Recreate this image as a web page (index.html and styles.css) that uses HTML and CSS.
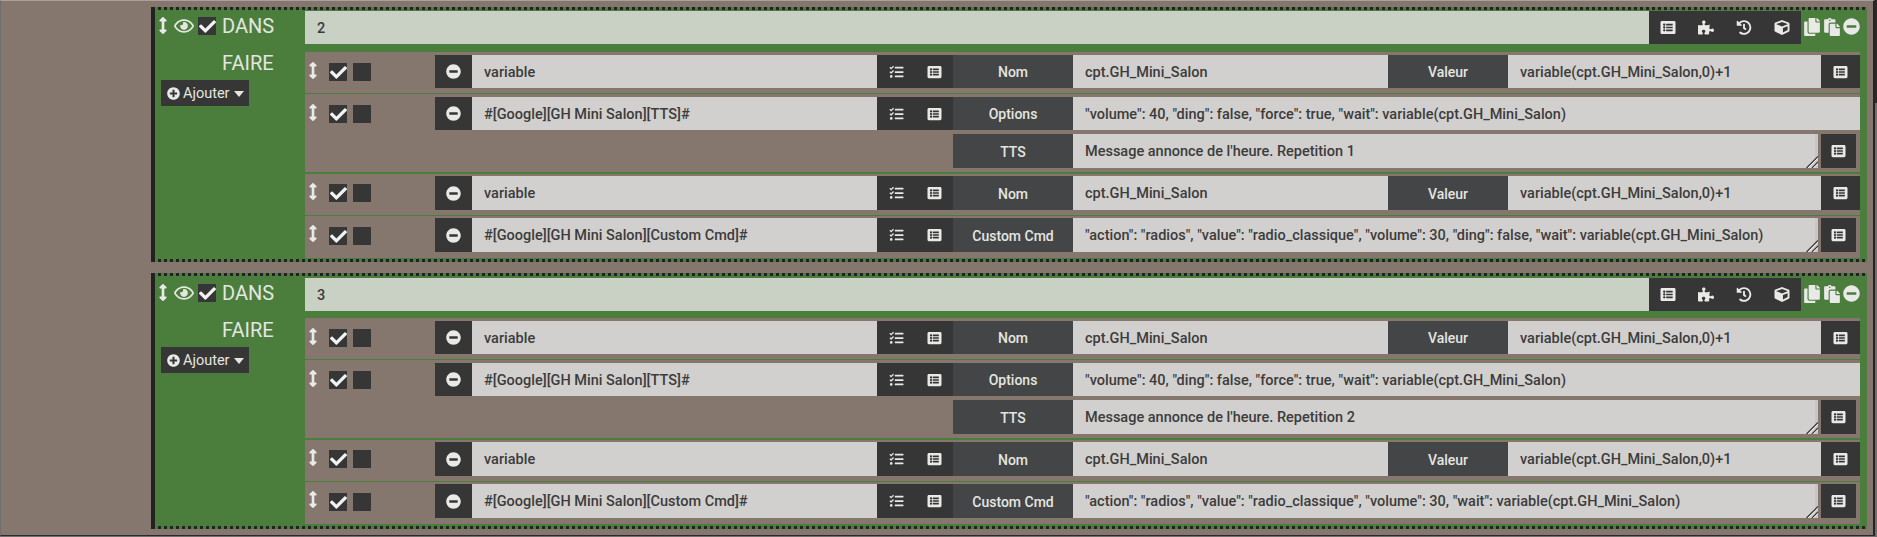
FILE: index.html
```html
<!DOCTYPE html>
<html lang="fr">
<head>
<meta charset="utf-8">
<title>Scénario</title>
<link rel="stylesheet" href="styles.css">
</head>
<body>
<svg class="sprite" aria-hidden="true">
  <symbol id="i-minus" viewBox="0 0 512 512"><path d="M256 8C119 8 8 119 8 256s111 248 248 248 248-111 248-248S393 8 256 8zM124 296c-6.6 0-12-5.4-12-12v-56c0-6.6 5.4-12 12-12h264c6.6 0 12 5.4 12 12v56c0 6.600-5.400 12-12 12H124z"/></symbol>
  <symbol id="i-plus" viewBox="0 0 512 512"><path d="M256 8C119 8 8 119 8 256s111 248 248 248 248-111 248-248S393 8 256 8zm144 276c0 6.600-5.400 12-12 12h-92v92c0 6.600-5.400 12-12 12h-56c-6.600 0-12-5.400-12-12v-92h-92c-6.600 0-12-5.400-12-12v-56c0-6.600 5.400-12 12-12h92v-92c0-6.600 5.400-12 12-12h56c6.600 0 12 5.400 12 12v92h92c6.600 0 12 5.400 12 12v56z"/></symbol>
  <symbol id="i-check" viewBox="0 0 512 512"><path d="M173.898 439.404l-166.4-166.4c-9.997-9.997-9.997-26.206 0-36.204l36.203-36.204c9.997-9.998 26.207-9.998 36.204 0L192 312.690 432.095 72.596c9.997-9.997 26.207-9.997 36.204 0l36.203 36.204c9.997 9.997 9.997 26.206 0 36.204l-294.400 294.401c-9.998 9.997-26.207 9.997-36.204-.001z"/></symbol>
  <symbol id="i-list" viewBox="0 0 512 512"><path d="M464 480H48c-26.510 0-48-21.490-48-48V80c0-26.510 21.490-48 48-48h416c26.510 0 48 21.490 48 48v352c0 26.510-21.490 48-48 48zM128 120c-22.091 0-40 17.909-40 40s17.909 40 40 40 40-17.909 40-40-17.909-40-40-40zm0 96c-22.091 0-40 17.909-40 40s17.909 40 40 40 40-17.909 40-40-17.909-40-40-40zm0 96c-22.091 0-40 17.909-40 40s17.909 40 40 40 40-17.909 40-40-17.909-40-40-40zm288-136v-32c0-6.627-5.373-12-12-12H204c-6.627 0-12 5.373-12 12v32c0 6.627 5.373 12 12 12h200c6.627 0 12-5.373 12-12zm0 96v-32c0-6.627-5.373-12-12-12H204c-6.627 0-12 5.373-12 12v32c0 6.627 5.373 12 12 12h200c6.627 0 12-5.373 12-12zm0 96v-32c0-6.627-5.373-12-12-12H204c-6.627 0-12 5.373-12 12v32c0 6.627 5.373 12 12 12h200c6.627 0 12-5.373 12-12z"/></symbol>
  <symbol id="i-arrows" viewBox="0 0 256 512"><path d="M214.059 377.941H168V134.059h46.059c21.382 0 32.090-25.851 16.971-40.971L144.971 7.029c-9.373-9.373-24.568-9.373-33.941 0L24.971 93.088c-15.119 15.119-4.411 40.971 16.971 40.971H88v243.882H41.941c-21.382 0-32.090 25.851-16.971 40.971l86.059 86.059c9.373 9.373 24.568 9.373 33.941 0l86.059-86.059c15.120-15.119 4.412-40.971-16.970-40.971z"/></symbol>
  <symbol id="i-eye" viewBox="0 0 576 512"><path d="M288 144a110.940 110.940 0 0 0-31.240 5 55.400 55.400 0 0 1 7.240 27 56 56 0 0 1-56 56 55.400 55.400 0 0 1-27-7.240A111.710 111.710 0 1 0 288 144zm284.520 97.400C518.290 135.590 410.930 64 288 64S57.680 135.640 3.480 241.410a32.350 32.350 0 0 0 0 29.190C57.710 376.410 165.070 448 288 448s230.320-71.640 284.520-177.410a32.350 32.350 0 0 0 0-29.190zM288 400c-98.650 0-189.090-55-237.930-144C98.910 167 189.340 112 288 112s189.090 55 237.930 144C477.100 345 386.660 400 288 400z"/></symbol>
  <symbol id="i-tasks" viewBox="0 0 512 512"><path d="M139.610 35.500a12 12 0 0 0-17 0L58.930 98.810l-22.700-22.120a12 12 0 0 0-17 0L3.530 92.410a12 12 0 0 0 0 17l47.590 47.400a12.780 12.780 0 0 0 17.610 0l15.590-15.620L156.520 69a12.090 12.090 0 0 0 .09-17zm0 159.190a12 12 0 0 0-17 0l-63.680 63.720-22.700-22.100a12 12 0 0 0-17 0L3.530 252a12 12 0 0 0 0 17L51 316.500a12.770 12.770 0 0 0 17.600 0l15.700-15.690 72.200-72.220a12 12 0 0 0 .09-16.900zM64 368c-26.490 0-48.590 21.500-48.590 48S37.530 464 64 464a48 48 0 0 0 0-96zm432 16H208a16 16 0 0 0-16 16v32a16 16 0 0 0 16 16h288a16 16 0 0 0 16-16v-32a16 16 0 0 0-16-16zm0-320H208a16 16 0 0 0-16 16v32a16 16 0 0 0 16 16h288a16 16 0 0 0 16-16V80a16 16 0 0 0-16-16zm0 160H208a16 16 0 0 0-16 16v32a16 16 0 0 0 16 16h288a16 16 0 0 0 16-16v-32a16 16 0 0 0-16-16z"/></symbol>
  <symbol id="i-puzzle" viewBox="0 0 576 512"><path d="M519.442 288.651c-41.519 0-59.500 31.593-82.058 31.593C377.409 320.244 432 144 432 144s-196.288 80-196.288-3.297c0-35.827 36.288-46.250 36.288-85.985C272 19.216 243.885 0 210.539 0c-34.654 0-66.366 18.891-66.366 56.346 0 41.364 31.711 59.277 31.711 81.750C175.885 207.719 0 166.758 0 166.758v333.237s178.635 41.047 178.635-28.662c0-22.473-40-40.107-40-81.471 0-37.456 29.250-56.346 63.577-56.346 33.673 0 61.788 19.216 61.788 54.717 0 39.735-36.288 50.158-36.288 85.985 0 60.803 129.675 25.730 181.230 25.730 0 0-34.725-120.101 25.827-120.101 35.962 0 46.423 36.152 86.308 36.152C556.712 416 576 387.990 576 354.443c0-34.199-18.962-65.792-56.558-65.792z"/></symbol>
  <symbol id="i-history" viewBox="0 0 512 512"><path d="M504 255.531c.253 136.640-111.180 248.372-247.820 248.468-59.015.042-113.223-20.530-155.822-54.911-11.077-8.940-11.905-25.541-1.839-35.607l11.267-11.267c8.609-8.609 22.353-9.551 31.891-1.984C173.062 425.135 212.781 440 256 440c101.705 0 184-82.311 184-184 0-101.705-82.311-184-184-184-48.814 0-93.149 18.969-126.068 49.932l50.754 50.754c10.080 10.080 2.941 27.314-11.313 27.314H24c-8.837 0-16-7.163-16-16V38.627c0-14.254 17.234-21.393 27.314-11.314l49.372 49.372C129.209 34.136 189.552 8 256 8c136.810 0 247.747 110.780 248 247.531zm-180.912 78.784l9.823-12.630c8.138-10.463 6.253-25.542-4.210-33.679L288 256.349V152c0-13.255-10.745-24-24-24h-16c-13.255 0-24 10.745-24 24v135.651l65.409 50.874c10.463 8.137 25.541 6.253 33.679-4.210z"/></symbol>
  <symbol id="i-cube" viewBox="0 0 512 512"><path d="M239.100 6.300l-208 78c-18.700 7-31.100 25-31.100 45v225.100c0 18.200 10.300 34.800 26.500 42.900l208 104c13.500 6.800 29.400 6.800 42.900 0l208-104c16.300-8.100 26.500-24.800 26.500-42.900V129.300c0-20-12.400-37.900-31.100-44.900l-208-78C262 2.200 250 2.200 239.100 6.300zM256 68.400l192 72v1.100l-192 78-192-78v-1.100l192-72zm32 356V275.500l160-65v133.900l-160 80z"/></symbol>
  <symbol id="i-copy" viewBox="0 0 448 512"><path d="M320 448v40c0 13.255-10.745 24-24 24H24c-13.255 0-24-10.745-24-24V120c0-13.255 10.745-24 24-24h72v296c0 30.879 25.121 56 56 56h168zm0-344V0H152c-13.255 0-24 10.745-24 24v368c0 13.255 10.745 24 24 24h272c13.255 0 24-10.745 24-24V128H344c-13.200 0-24-10.800-24-24zm120.971-31.029L375.029 7.029A24 24 0 0 0 358.059 0H352v96h96v-6.059a24 24 0 0 0-7.029-16.970z"/></symbol>
  <symbol id="i-paste" viewBox="0 0 448 512"><path d="M128 184c0-30.879 25.121-56 56-56h136V56c0-13.255-10.745-24-24-24h-80.610C204.306 12.890 183.637 0 160 0s-44.306 12.890-55.390 32H24C10.745 32 0 42.745 0 56v336c0 13.255 10.745 24 24 24h104V184zm32-144c13.255 0 24 10.745 24 24s-10.745 24-24 24-24-10.745-24-24 10.745-24 24-24zm184 248h104v200c0 13.255-10.745 24-24 24H184c-13.255 0-24-10.745-24-24V184c0-13.255 10.745-24 24-24h136v104c0 13.200 10.800 24 24 24zm104-38.059V256h-96v-96h6.059a24 24 0 0 1 16.970 7.029l65.941 65.941a24.002 24.002 0 0 1 7.030 16.971z"/></symbol>
  <symbol id="i-grip" viewBox="0 0 12 12"><path d="M0.500 12 12 0.500M6 12 12 6" fill="none" stroke="#333" stroke-width="1.200"/><path d="M2 12 12 2M7.500 12 12 7.500" fill="none" stroke="#f4f4f4" stroke-width="0.800"/></symbol>
</svg>

<main class="page">

  <section class="block">
    <div class="head-row">
      <div class="head-left">
        <svg class="ic arrows"><use href="#i-arrows"/></svg>
        <svg class="ic eye"><use href="#i-eye"/></svg>
        <span class="box"><svg class="ic"><use href="#i-check"/></svg></span>
        <span class="word">DANS</span>
      </div>
      <div class="field head-field">2</div>
      <div class="addon head-addon">
        <svg class="ic"><use href="#i-list"/></svg>
        <svg class="ic"><use href="#i-puzzle"/></svg>
        <svg class="ic"><use href="#i-history"/></svg>
        <svg class="ic"><use href="#i-cube"/></svg>
      </div>
      <div class="head-tools">
        <svg class="ic tool-copy"><use href="#i-copy"/></svg>
        <svg class="ic tool-paste"><use href="#i-paste"/></svg>
        <svg class="ic tool-minus"><use href="#i-minus"/></svg>
      </div>
    </div>
    <div class="body-row">
      <div class="body-left">
        <span class="word">FAIRE</span>
        <button class="add" type="button"><svg class="ic"><use href="#i-plus"/></svg>Ajouter<i class="caret"></i></button>
      </div>
      <div class="actions">
        <div class="action first">
          <div class="line">
            <svg class="ic arrows"><use href="#i-arrows"/></svg>
            <span class="box"><svg class="ic"><use href="#i-check"/></svg></span>
            <span class="box empty"></span>
            <div class="addon minus"><svg class="ic"><use href="#i-minus"/></svg></div>
            <div class="field name">variable</div>
            <div class="addon pair"><svg class="ic"><use href="#i-tasks"/></svg><svg class="ic"><use href="#i-list"/></svg></div>
            <div class="label">Nom</div>
            <div class="field mid">cpt.GH_Mini_Salon</div>
            <div class="label">Valeur</div>
            <div class="field grow">variable(cpt.GH_Mini_Salon,0)+1</div>
            <div class="addon end"><svg class="ic"><use href="#i-list"/></svg></div>
          </div>
        </div>
        <div class="action second">
          <div class="line">
            <svg class="ic arrows"><use href="#i-arrows"/></svg>
            <span class="box"><svg class="ic"><use href="#i-check"/></svg></span>
            <span class="box empty"></span>
            <div class="addon minus"><svg class="ic"><use href="#i-minus"/></svg></div>
            <div class="field name">#[Google][GH Mini Salon][TTS]#</div>
            <div class="addon pair"><svg class="ic"><use href="#i-tasks"/></svg><svg class="ic"><use href="#i-list"/></svg></div>
            <div class="label">Options</div>
            <div class="field grow">"volume": 40, "ding": false, "force": true, "wait": variable(cpt.GH_Mini_Salon)</div>
          </div>
          <div class="line sub tall">
            <div class="label">TTS</div>
            <div class="area-wrap grow">
              <textarea class="field area" rows="1" readonly>Message annonce de l'heure. Repetition 1</textarea>
              <svg class="grip"><use href="#i-grip"/></svg>
            </div>
            <div class="addon end narrow"><svg class="ic"><use href="#i-list"/></svg></div>
          </div>
        </div>
        <div class="action third">
          <div class="line tall">
            <svg class="ic arrows"><use href="#i-arrows"/></svg>
            <span class="box"><svg class="ic"><use href="#i-check"/></svg></span>
            <span class="box empty"></span>
            <div class="addon minus"><svg class="ic"><use href="#i-minus"/></svg></div>
            <div class="field name">variable</div>
            <div class="addon pair"><svg class="ic"><use href="#i-tasks"/></svg><svg class="ic"><use href="#i-list"/></svg></div>
            <div class="label">Nom</div>
            <div class="field mid">cpt.GH_Mini_Salon</div>
            <div class="label">Valeur</div>
            <div class="field grow">variable(cpt.GH_Mini_Salon,0)+1</div>
            <div class="addon end"><svg class="ic"><use href="#i-list"/></svg></div>
          </div>
        </div>
        <div class="action fourth">
          <div class="line tall">
            <svg class="ic arrows"><use href="#i-arrows"/></svg>
            <span class="box"><svg class="ic"><use href="#i-check"/></svg></span>
            <span class="box empty"></span>
            <div class="addon minus"><svg class="ic"><use href="#i-minus"/></svg></div>
            <div class="field name">#[Google][GH Mini Salon][Custom Cmd]#</div>
            <div class="addon pair"><svg class="ic"><use href="#i-tasks"/></svg><svg class="ic"><use href="#i-list"/></svg></div>
            <div class="label">Custom Cmd</div>
            <div class="area-wrap grow">
              <textarea class="field area" rows="1" readonly>"action": "radios", "value": "radio_classique", "volume": 30, "ding": false, "wait": variable(cpt.GH_Mini_Salon)</textarea>
              <svg class="grip"><use href="#i-grip"/></svg>
            </div>
            <div class="addon end narrow"><svg class="ic"><use href="#i-list"/></svg></div>
          </div>
        </div>
      </div>
    </div>
  </section>

  <section class="block">
    <div class="head-row">
      <div class="head-left">
        <svg class="ic arrows"><use href="#i-arrows"/></svg>
        <svg class="ic eye"><use href="#i-eye"/></svg>
        <span class="box"><svg class="ic"><use href="#i-check"/></svg></span>
        <span class="word">DANS</span>
      </div>
      <div class="field head-field">3</div>
      <div class="addon head-addon">
        <svg class="ic"><use href="#i-list"/></svg>
        <svg class="ic"><use href="#i-puzzle"/></svg>
        <svg class="ic"><use href="#i-history"/></svg>
        <svg class="ic"><use href="#i-cube"/></svg>
      </div>
      <div class="head-tools">
        <svg class="ic tool-copy"><use href="#i-copy"/></svg>
        <svg class="ic tool-paste"><use href="#i-paste"/></svg>
        <svg class="ic tool-minus"><use href="#i-minus"/></svg>
      </div>
    </div>
    <div class="body-row">
      <div class="body-left">
        <span class="word">FAIRE</span>
        <button class="add" type="button"><svg class="ic"><use href="#i-plus"/></svg>Ajouter<i class="caret"></i></button>
      </div>
      <div class="actions">
        <div class="action first">
          <div class="line">
            <svg class="ic arrows"><use href="#i-arrows"/></svg>
            <span class="box"><svg class="ic"><use href="#i-check"/></svg></span>
            <span class="box empty"></span>
            <div class="addon minus"><svg class="ic"><use href="#i-minus"/></svg></div>
            <div class="field name">variable</div>
            <div class="addon pair"><svg class="ic"><use href="#i-tasks"/></svg><svg class="ic"><use href="#i-list"/></svg></div>
            <div class="label">Nom</div>
            <div class="field mid">cpt.GH_Mini_Salon</div>
            <div class="label">Valeur</div>
            <div class="field grow">variable(cpt.GH_Mini_Salon,0)+1</div>
            <div class="addon end"><svg class="ic"><use href="#i-list"/></svg></div>
          </div>
        </div>
        <div class="action second">
          <div class="line">
            <svg class="ic arrows"><use href="#i-arrows"/></svg>
            <span class="box"><svg class="ic"><use href="#i-check"/></svg></span>
            <span class="box empty"></span>
            <div class="addon minus"><svg class="ic"><use href="#i-minus"/></svg></div>
            <div class="field name">#[Google][GH Mini Salon][TTS]#</div>
            <div class="addon pair"><svg class="ic"><use href="#i-tasks"/></svg><svg class="ic"><use href="#i-list"/></svg></div>
            <div class="label">Options</div>
            <div class="field grow">"volume": 40, "ding": false, "force": true, "wait": variable(cpt.GH_Mini_Salon)</div>
          </div>
          <div class="line sub tall">
            <div class="label">TTS</div>
            <div class="area-wrap grow">
              <textarea class="field area" rows="1" readonly>Message annonce de l'heure. Repetition 2</textarea>
              <svg class="grip"><use href="#i-grip"/></svg>
            </div>
            <div class="addon end narrow"><svg class="ic"><use href="#i-list"/></svg></div>
          </div>
        </div>
        <div class="action third">
          <div class="line tall">
            <svg class="ic arrows"><use href="#i-arrows"/></svg>
            <span class="box"><svg class="ic"><use href="#i-check"/></svg></span>
            <span class="box empty"></span>
            <div class="addon minus"><svg class="ic"><use href="#i-minus"/></svg></div>
            <div class="field name">variable</div>
            <div class="addon pair"><svg class="ic"><use href="#i-tasks"/></svg><svg class="ic"><use href="#i-list"/></svg></div>
            <div class="label">Nom</div>
            <div class="field mid">cpt.GH_Mini_Salon</div>
            <div class="label">Valeur</div>
            <div class="field grow">variable(cpt.GH_Mini_Salon,0)+1</div>
            <div class="addon end"><svg class="ic"><use href="#i-list"/></svg></div>
          </div>
        </div>
        <div class="action fourth">
          <div class="line tall">
            <svg class="ic arrows"><use href="#i-arrows"/></svg>
            <span class="box"><svg class="ic"><use href="#i-check"/></svg></span>
            <span class="box empty"></span>
            <div class="addon minus"><svg class="ic"><use href="#i-minus"/></svg></div>
            <div class="field name">#[Google][GH Mini Salon][Custom Cmd]#</div>
            <div class="addon pair"><svg class="ic"><use href="#i-tasks"/></svg><svg class="ic"><use href="#i-list"/></svg></div>
            <div class="label">Custom Cmd</div>
            <div class="area-wrap grow">
              <textarea class="field area" rows="1" readonly>"action": "radios", "value": "radio_classique", "volume": 30, "wait": variable(cpt.GH_Mini_Salon)</textarea>
              <svg class="grip"><use href="#i-grip"/></svg>
            </div>
            <div class="addon end narrow"><svg class="ic"><use href="#i-list"/></svg></div>
          </div>
        </div>
      </div>
    </div>
  </section>

</main>
</body>
</html>
```

FILE: styles.css
```css
* { box-sizing: border-box; }

html, body {
  margin: 0;
  height: 537px;
  overflow: hidden;
}

body {
  position: relative;
  background: #6f6f6f;
  font-family: Roboto, "Liberation Sans", sans-serif;
  font-size: 14px;
  color: #3c3c3c;
}

/* scrollbar thumb at the window edge */
body::after {
  content: "";
  position: absolute;
  top: 0;
  right: 0;
  width: 2px;
  height: 103px;
  background: #2a2a2a;
}

.sprite { display: none; }

.ic {
  display: block;
  width: 14px;
  height: 14px;
  fill: #e9e9e7;
}

.page {
  height: 536px;
  margin-right: 2px;
  padding: 6px 2px 0 150px;
  border-top: 1px solid #a8a29c;
  border-left: 1px solid #6f6f6f;
  border-right: 2px solid #242424;
  border-bottom: 1px solid #2a2a2a;
  background: #85776e;
  display: flex;
  flex-direction: column;
  gap: 11px;
}

.block {
  height: 255px;
  margin-right: 4px;
  padding: 3px 7px 3px 0;
  border-left: 4px solid #222;
  background:
    repeating-linear-gradient(90deg, #222 0 3px, transparent 3px 6px) 3px 0 / 100% 3px no-repeat,
    repeating-linear-gradient(90deg, #222 0 3px, transparent 3px 6px) 3px 100% / 100% 3px no-repeat,
    #4b7d3d;
}

.block + .block { height: 256px; }
.block + .block .head-row { margin-top: 2px; }
.block + .block .body-row { margin-top: 7px; }
.block + .block .body-left { padding-top: 2px; }

.head-row {
  display: flex;
  height: 33px;
  margin-top: 1px;
}

.head-left {
  width: 150px;
  flex: none;
  display: flex;
  align-items: flex-start;
  padding: 5px 0 0 3px;
}

.head-left .arrows { width: 10px; height: 17px; margin-top: 1px; }
.head-left .eye { width: 20px; height: 18px; margin: 1px 0 0 6px; fill: #e4e6e0; }
.head-left .box { margin: 1px 0 0 4px; }
.head-left .word { margin-left: 6px; }

.word {
  font-size: 20px;
  line-height: 20px;
  color: #e4e6e0;
}

.box {
  flex: none;
  width: 18px;
  height: 18px;
  background: #363636;
  display: flex;
  align-items: flex-end;
  justify-content: center;
}

.box .ic { width: 17px; height: 17px; fill: #f2f2f2; }

.field {
  display: block;
  height: 100%;
  padding: 0 12px;
  background: #d2d0ce;
  color: #3c3c3c;
  font: 500 14.5px/35px Roboto, "Liberation Sans", sans-serif;
  white-space: nowrap;
  overflow: hidden;
}

.head-field {
  flex: 1;
  background: #c9d1c5;
  line-height: 36px;
}

.addon {
  flex: none;
  height: 100%;
  background: #363636;
  display: flex;
  align-items: center;
  justify-content: space-around;
}

.head-addon { width: 152px; }
.head-addon .ic { width: 16px; height: 15px; }

.head-tools {
  width: 59px;
  flex: none;
  display: flex;
  align-items: flex-start;
  padding: 7px 0 0 3px;
}

.tool-copy { width: 16px; height: 18px; }
.tool-paste { width: 16px; height: 18px; margin-left: 4px; }
.tool-minus { width: 17px; height: 17px; margin-left: 3px; }

.body-row {
  display: flex;
  margin-top: 8px;
}

.body-left {
  width: 150px;
  flex: none;
  padding: 1px 0 0 6px;
}

.body-left .word {
  display: block;
  margin-left: 61px;
}

.add {
  display: flex;
  align-items: center;
  width: 88px;
  height: 26px;
  margin-top: 7px;
  padding: 0 0 0 6px;
  background: #363636;
  border: 0;
  color: #e4e6e0;
  font: 400 14.5px Roboto, "Liberation Sans", sans-serif;
}

.add .ic { width: 13px; height: 13px; margin-right: 3px; }

.caret {
  margin: 1px 0 0 4px;
  border-top: 6px solid #e4e6e0;
  border-left: 5.5px solid transparent;
  border-right: 5.5px solid transparent;
}

.actions {
  flex: 1;
  min-width: 0;
  display: flex;
  flex-direction: column;
}

.action { background: #85776e; }

.first  { padding: 3px 0 5px; border-bottom: 1px solid #4b7d3d; }
.second { padding: 3px 0 4px; border-bottom: 2px solid #4b7d3d; }
.third  { padding: 2px 0 5px; border-bottom: 1px solid #4b7d3d; }
.fourth { padding: 2px 0 6px; }

.line {
  display: flex;
  height: 33px;
}

.line.tall { height: 34px; }

.line.sub {
  margin-top: 4px;
  padding-left: 648px;
}

.line > .arrows {
  flex: none;
  width: 10px;
  height: 17px;
  margin: 7px 0 0 3px;
}

.line > .box { margin: 8px 6px 0 0; }
.line > .arrows + .box { margin-left: 11px; }
.fourth .line > .box { margin-top: 9px; }

.minus { width: 37px; margin-left: 58px; }
.minus .ic { width: 15px; height: 15px; }

.name { width: 405px; flex: none; }

.pair { width: 76px; }
.pair .ic { width: 15px; height: 14px; }

.label {
  flex: none;
  width: 120px;
  height: 100%;
  background: #434547;
  color: #e4e6e0;
  font-weight: 500;
  font-size: 14px;
  line-height: 35px;
  text-align: center;
}

.tall .label,
.tall .field { line-height: 36px; }

.mid { width: 315px; flex: none; }
.grow { flex: 1; min-width: 0; }

.end { width: 39px; }
.end .ic { width: 15px; height: 14px; }

.narrow { width: 35px; margin: 0 4px 0 3px; }

.area-wrap {
  position: relative;
  height: 100%;
}

.area {
  width: 100%;
  border: 0;
  border-right: 3px solid #c8c6c4;
  border-radius: 0;
  outline: 0;
  margin: 0;
  resize: none;
}

.grip {
  position: absolute;
  right: 0;
  bottom: 0;
  width: 12px;
  height: 12px;
}
```
